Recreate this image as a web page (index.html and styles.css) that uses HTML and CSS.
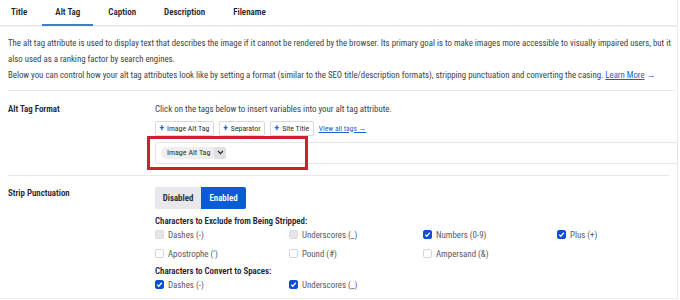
FILE: index.html
```html
<!DOCTYPE html>
<html>
<head>
<meta charset="utf-8">
<link rel="stylesheet" href="styles.css">
</head>
<body>
<div class="card">
  <nav class="tabs">
    <span class="tab">Title</span>
    <span class="tab active">Alt Tag</span>
    <span class="tab">Caption</span>
    <span class="tab">Description</span>
    <span class="tab">Filename</span>
  </nav>
  <div class="intro">
    <p>The alt tag attribute is used to display text that describes the image if it cannot be rendered by the browser. Its primary goal is to make images more accessible to visually impaired users, but it also used as a ranking factor by search engines.</p>
    <p>Below you can control how your alt tag attributes look like by setting a format (similar to the SEO title/description formats), stripping punctuation and converting the casing. <a class="link">Learn More</a> <span class="arrow">→</span></p>
  </div>
  <div class="row row-format">
    <div class="label">Alt Tag Format</div>
    <div class="field">
      <div class="hint">Click on the tags below to insert variables into your alt tag attribute.</div>
      <div class="tags">
        <span class="tagbtn"><b>+</b> Image Alt Tag</span>
        <span class="tagbtn"><b>+</b> Separator</span>
        <span class="tagbtn"><b>+</b> Site Title</span>
        <a class="viewall">View all tags →</a>
      </div>
      <div class="input">
        <span class="chip">Image Alt Tag<span class="chev"><svg width="7" height="5" viewBox="0 0 7 5"><path d="M1 1l2.5 2.5L6 1" fill="none" stroke="#333" stroke-width="1.3"/></svg></span></span>
      </div>
      <div class="highlight"></div>
    </div>
  </div>
  <div class="row row-strip">
    <div class="label">Strip Punctuation</div>
    <div class="field">
      <div class="seg"><span class="seg-off">Disabled</span><span class="seg-on">Enabled</span></div>
      <div class="subhead">Characters to Exclude from Being Stripped:</div>
      <div class="checks">
        <label class="check"><span class="box grey"></span>Dashes (-)</label>
        <label class="check"><span class="box grey"></span>Underscores (_)</label>
        <label class="check"><span class="box on"><svg width="9" height="9" viewBox="0 0 9 9"><path d="M2.2 4.6l1.6 1.6 3-3.4" fill="none" stroke="#fff" stroke-width="1.3"/></svg></span>Numbers (0-9)</label>
        <label class="check"><span class="box on"><svg width="9" height="9" viewBox="0 0 9 9"><path d="M2.2 4.6l1.6 1.6 3-3.4" fill="none" stroke="#fff" stroke-width="1.3"/></svg></span>Plus (+)</label>
        <label class="check"><span class="box"></span>Apostrophe (')</label>
        <label class="check"><span class="box"></span>Pound (#)</label>
        <label class="check"><span class="box"></span>Ampersand (&amp;)</label>
      </div>
      <div class="subhead sub2">Characters to Convert to Spaces:</div>
      <div class="checks">
        <label class="check"><span class="box on"><svg width="9" height="9" viewBox="0 0 9 9"><path d="M2.2 4.6l1.6 1.6 3-3.4" fill="none" stroke="#fff" stroke-width="1.3"/></svg></span>Dashes (-)</label>
        <label class="check"><span class="box on"><svg width="9" height="9" viewBox="0 0 9 9"><path d="M2.2 4.6l1.6 1.6 3-3.4" fill="none" stroke="#fff" stroke-width="1.3"/></svg></span>Underscores (_)</label>
      </div>
    </div>
  </div>
</div>
</body>
</html>
```

FILE: styles.css
```css
* { box-sizing: border-box; }
html, body { margin: 0; padding: 0; background: #fff; }
body {
  font-family: "Roboto", sans-serif;
  font-stretch: 75%;
  color: #3b3f4a;
  font-size: 8.9px;
  width: 680px;
  height: 300px;
  overflow: hidden;
}
.card {
  width: 678px;
  height: 299px;
  border-right: 1px solid #ececec;
  border-bottom: 1px solid #ececec;
}
.tabs {
  display: flex;
  gap: 28px;
  padding-left: 11px;
  height: 26px;
  align-items: center;
  border-bottom: 1px solid #e6e6e6;
  box-shadow: 0 1px 0 #f3f3f3;
}
.tab {
  position: relative;
  font-size: 9px;
  font-weight: 600;
  color: #1f2430;
  line-height: 25px;
}
.tab.active::after {
  content: "";
  position: absolute;
  left: -13px;
  right: -13px;
  bottom: -1px;
  height: 2px;
  background: #3f7fc6;
}
.intro {
  margin: 0 2px 0 8px;
  padding: 10px 0 6px;
  border-bottom: 1px solid #e8e8e8;
  font-size: 8.8px;
  line-height: 15.5px;
}
.intro p { margin: 0; }
.intro p + p { margin-top: 1px; }
.link { color: #1a5fd6; text-decoration: underline; }
.arrow { color: #1a5fd6; }
.row {
  display: flex;
  margin: 0 8px;
  border-bottom: 1px solid #e8e8e8;
}
.label {
  width: 147px;
  flex: none;
  font-weight: 600;
  color: #1f2430;
  line-height: 14px;
}
.field { flex: 1; position: relative; }
.row-format { height: 85px; padding-top: 11px; }
.hint { line-height: 14px; }
.tags {
  display: flex;
  gap: 5px;
  align-items: center;
  margin-top: 5px;
  height: 15px;
}
.tagbtn {
  display: inline-flex;
  align-items: center;
  gap: 3px;
  height: 15px;
  padding: 0 3.5px;
  border: 1px solid #d9d9d9;
  border-radius: 2px;
  font-size: 7.8px;
  color: #2b2f38;
  background: #fff;
}
.tagbtn b { color: #1a5fd6; font-size: 9.5px; font-weight: 700; line-height: 1; }
.viewall { color: #1a5fd6; text-decoration: underline; font-size: 7.6px; }
.input {
  margin-top: 6px;
  margin-right: -9px;
  height: 22px;
  border: 1px solid #e4e4e4;
  border-radius: 2px;
  display: flex;
  align-items: center;
  padding-left: 5px;
}
.chip {
  display: inline-flex;
  align-items: center;
  gap: 4px;
  background: #eeeeef;
  border-radius: 6px;
  height: 12px;
  padding-left: 6px;
  font-size: 8px;
  color: #2b2f38;
}
.chev {
  display: inline-flex;
  align-items: center;
  justify-content: center;
  width: 12px;
  height: 12px;
  background: #e0e0e2;
  border-radius: 2px;
}
.highlight {
  position: absolute;
  left: -8px;
  top: 34px;
  width: 161px;
  height: 34px;
  border: 3px solid #cc1f2f;
}
.row-strip { height: 124px; padding-top: 12px; border-bottom: none; }
.row-strip .label { margin-top: -2px; }
.seg {
  display: inline-flex;
  height: 22px;
  margin-top: -1px;
  border-radius: 2px;
  overflow: hidden;
  font-weight: 600;
}
.seg span { display: flex; align-items: center; justify-content: center; }
.seg-off { width: 46px; background: #e8e8ec; color: #1f2430; }
.seg-on { width: 45px; background: #0b5ad6; color: #fff; }
.subhead {
  margin-top: 5px;
  font-weight: 600;
  color: #1f2430;
  line-height: 14px;
}
.sub2 { margin-top: 3px; }
.checks {
  display: grid;
  grid-template-columns: repeat(4, 134px);
  grid-auto-rows: 14px;
  row-gap: 5px;
}
.check {
  display: flex;
  align-items: center;
  gap: 4px;
  height: 14px;
  color: #555a66;
}
.box {
  width: 9px;
  height: 9px;
  border: 1px solid #d6d6d6;
  border-radius: 2px;
  background: #fff;
  flex: none;
  display: flex;
}
.box.grey { background: #e6e6e8; border-color: #dcdcdf; }
.box.on { background: #0b4fd6; border-color: #0b4fd6; }
.box svg { margin: -1px; }
```
